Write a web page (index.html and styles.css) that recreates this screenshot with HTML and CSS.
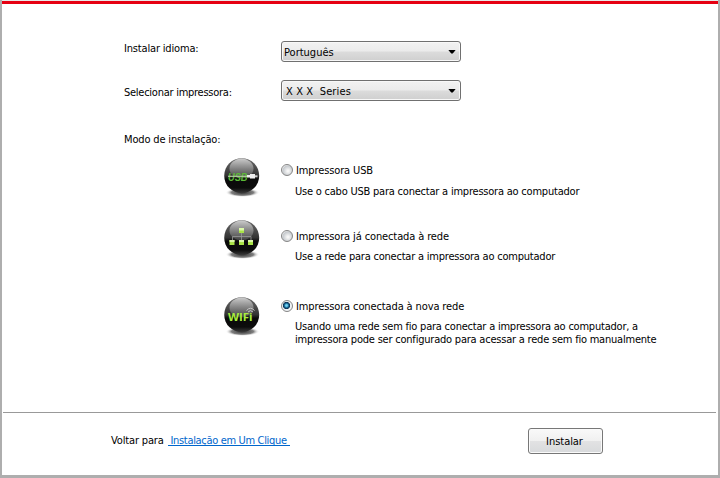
FILE: index.html
```html
<!DOCTYPE html>
<html lang="pt">
<head>
<meta charset="utf-8">
<title>Instalar</title>
<link rel="stylesheet" href="styles.css">
</head>
<body>
<svg class="defs" width="0" height="0" aria-hidden="true">
  <defs>
    <linearGradient id="ball" x1="0" y1="0" x2="0" y2="1">
      <stop offset="0" stop-color="#6c6c6c"/><stop offset=".5" stop-color="#333"/><stop offset=".6" stop-color="#0a0a0a"/><stop offset=".85" stop-color="#0c0c0c"/><stop offset="1" stop-color="#3c3c3c"/>
    </linearGradient>
    <linearGradient id="gloss" x1="0" y1="0" x2="0" y2="1">
      <stop offset="0" stop-color="#ddd" stop-opacity=".85"/><stop offset="1" stop-color="#777" stop-opacity=".35"/>
    </linearGradient>
    <radialGradient id="shade">
      <stop offset="0" stop-color="#222" stop-opacity=".95"/><stop offset=".65" stop-color="#555" stop-opacity=".75"/><stop offset="1" stop-color="#fff" stop-opacity="0"/>
    </radialGradient>
    <g id="orb">
      <ellipse cx="19.500" cy="34.500" rx="17" ry="4.5" fill="url(#shade)"/>
      <circle cx="18.700" cy="17.700" r="17.500" fill="url(#ball)"/>
      <ellipse cx="18.500" cy="10.500" rx="12" ry="10" fill="url(#gloss)"/>
    </g>
  </defs>
</svg>
<main class="window">
  <div class="form">
    <div class="field language">
      <label>Instalar idioma:</label>
      <div class="select"><span>Português</span><i class="arrow"></i></div>
    </div>
    <div class="field printer">
      <label>Selecionar impressora:</label>
      <div class="select"><span class="model">X X X&nbsp; Series</span><i class="arrow"></i></div>
    </div>
    <div class="mode-title">Modo de instalação:</div>
    <div class="mode usb">
      <svg class="icon" width="38" height="41" viewBox="0 0 38 41">
        <use href="#orb"/>
        <text x="5" y="22.500" class="usb-text" textLength="19.500" lengthAdjust="spacingAndGlyphs">USB</text>
        <path d="M5 18.300H25" stroke="#b4cba2" stroke-width="1.200"/>
        <path d="M24 17h3v-1h5v4.500h-5v-1h-3z" fill="#eee"/><path d="M32 17.300h2.500v2h-2.500z" fill="#ccc"/>
      </svg>
      <i class="radio"></i>
      <div class="text"><div class="name">Impressora USB</div><p>Use o cabo USB para conectar a impressora ao computador</p></div>
    </div>
    <div class="mode network">
      <svg class="icon" width="38" height="41" viewBox="0 0 38 41">
        <use href="#orb"/>
        <path d="M18.500 12v9M9.500 21v-4.500h18.500V21" fill="none" stroke="#999" stroke-width=".8"/>
        <path d="M16 8h5v5h-5zM6.500 20h5v5h-5zM16 20h5v5h-5zM25 20h5v5h-5z" fill="#a9e348"/>
        <path d="M16 8h5v2.500h-5zM6.500 20h5v2h-5zM16 20h5v2h-5zM25 20h5v2h-5z" fill="#dcf9aa"/>
      </svg>
      <i class="radio"></i>
      <div class="text"><div class="name">Impressora já conectada à rede</div><p>Use a rede para conectar a impressora ao computador</p></div>
    </div>
    <div class="mode wifi">
      <svg class="icon" width="38" height="41" viewBox="0 0 38 41">
        <use href="#orb"/>
        <text x="5" y="24" class="wifi-text" textLength="24.500" lengthAdjust="spacingAndGlyphs">WIFi</text>
        <path d="M23.500 13.500q4-4.500 8 0M25 15q2.500-2.800 5 0" fill="none" stroke="#c6c6c6"/>
      </svg>
      <i class="radio checked"></i>
      <div class="text"><div class="name">Impressora conectada à nova rede</div><p>Usando uma rede sem fio para conectar a impressora ao computador, a<br>impressora pode ser configurado para acessar a rede sem fio manualmente</p></div>
    </div>
  </div>
  <hr>
  <footer>
    <span>Voltar para</span><a href="#">&nbsp;Instalação em Um Clique&nbsp;</a>
    <button type="button">Instalar</button>
  </footer>
</main>
</body>
</html>
```
FILE: styles.css
```css
* { box-sizing: border-box; }
body { margin: 0; background: #fff; color: #000; font: 11px/14px "DejaVu Sans Condensed", "DejaVu Sans", sans-serif; font-stretch: condensed; white-space: nowrap; overflow: hidden; }
.defs { display: block; height: 0; }
.window { display: flex; flex-direction: column; width: 720px; height: 478px; border: solid #aeaeae; border-width: 0 2px 3px; }
.window::before { content: ""; box-sizing: border-box; height: 4px; flex: none; background: #e60012; border-top: 1px solid #e8e8e8; }
.form { height: 408px; padding: 37px 0 0 122px; }
hr { width: 713px; height: 1px; margin: 0 1px; border: 0; background: #999; flex: none; }
.field { display: flex; height: 21px; }
.language { margin-bottom: 18px; }
.field label { width: 157px; padding-top: 1px; letter-spacing: -.17px; }
.printer label { padding-top: 6px; letter-spacing: -.26px; }
.select { width: 180px; height: 21px; display: flex; align-items: center; justify-content: space-between; padding: 0 4px 0 2px; border: 1px solid #707070; border-radius: 3px; background: linear-gradient(#f2f2f2, #ebebeb 49%, #dcdcdc 51%, #cfcfcf); box-shadow: inset 0 0 0 1px #f8f8f8; }
.select span { padding-top: 2px; }
.select .model { padding-left: 2px; letter-spacing: .12px; }
.arrow { width: 8px; height: 4px; background: #000; clip-path: polygon(0 0, 100% 0, 60% 100%, 40% 100%); }
.mode-title { margin-top: 32px; height: 14px; letter-spacing: -.16px; }
.mode { display: flex; padding-left: 99px; }
.usb { margin-top: 11px; height: 62px; }
.network { height: 77px; }
.icon { flex: none; width: 38px; height: 41px; }
.radio { flex: none; width: 12px; height: 12px; margin: 6px 3px 0 20px; border: 1px solid #858585; border-radius: 50%; background: radial-gradient(circle at 60% 60%, #f6f6f6 10%, #c5c9cd 60%, #f4f4f4 75%); }
.checked { background: radial-gradient(circle at 45% 45%, #73d5f5 0 10%, #176895 28%, #0c2c4c 43%, #eef2f4 50%); }
.text { padding-top: 6px; }
.network .radio { margin-top: 10px; }
.network .text { padding-top: 10px; }
.wifi .radio { margin-top: 3px; }
.wifi .text { padding-top: 3px; }
.name { letter-spacing: -.12px; }
.text p { margin: 6px 0 0 -1px; line-height: 13px; letter-spacing: -.215px; }
.usb .text p { margin-top: 7px; }
.usb-text { font: italic bold 11px "Liberation Sans", sans-serif; fill: #5cba38; }
.wifi-text { font: bold 11px "Open Sans", sans-serif; fill: #a9ef3b; }
footer { display: flex; align-items: flex-start; padding: 15px 115px 0 109px; }
footer span { margin-top: 6px; letter-spacing: -.15px; }
footer a { margin: 9px 0 0 4px; color: #0066cc; text-decoration: none; border-bottom: 1px solid #0066cc; line-height: 8px; letter-spacing: -.33px; }
button { margin-left: auto; width: 75px; height: 26px; padding: 1px 2px 0 0; font: inherit; letter-spacing: -.05px; color: #000; border: 1px solid #777; border-radius: 3px; background: linear-gradient(#f9f9f9, #f0f0f0 49%, #e2e2e3 51%, #d8dadc); box-shadow: inset 0 0 0 1px #fafafa; }
```
